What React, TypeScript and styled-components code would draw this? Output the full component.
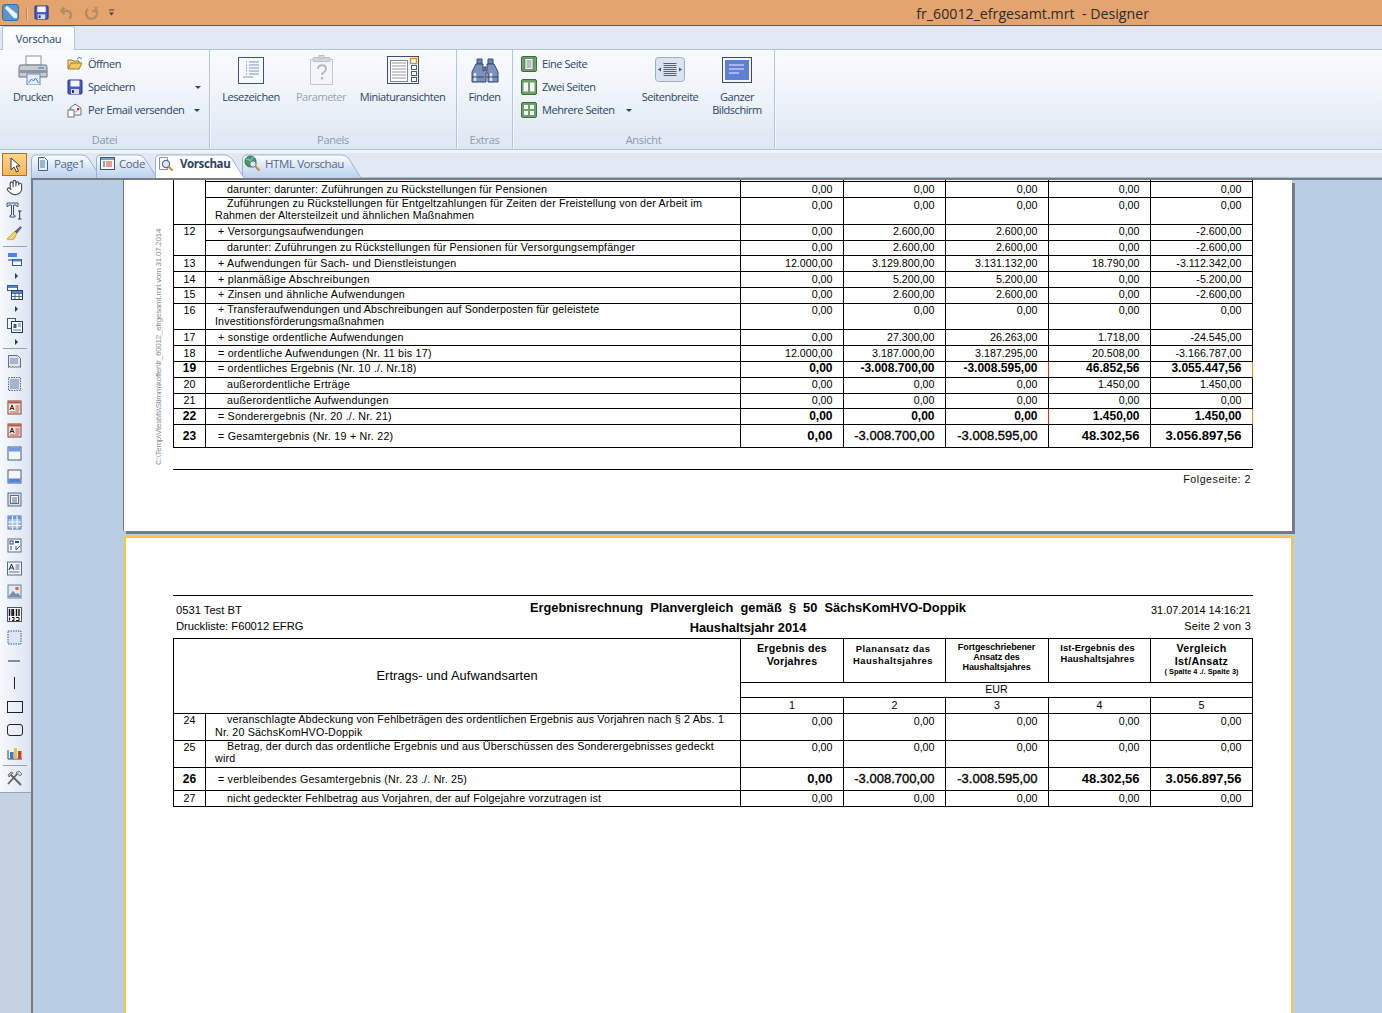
import React from 'react'
import styled, { createGlobalStyle } from 'styled-components'
import { Hand } from 'lucide-react'

const UI_FONT = `"Open Sans", "Noto Sans", sans-serif`
const REPORT_FONT = `"Liberation Sans", Arial, sans-serif`

const GlobalStyle = createGlobalStyle`
  html, body {
    margin: 0;
    padding: 0;
    height: 100%;
    overflow: hidden;
    background: #dfe8f3;
  }
  #root {
    height: 100%;
  }
  * {
    box-sizing: border-box;
  }
`

const Window = styled.div`
  display: flex;
  flex-direction: column;
  height: 100vh;
  overflow: hidden;
  font-family: ${UI_FONT};
`

/* title bar */
const TitleBar = styled.div`
  flex: none;
  height: 26px;
  display: flex;
  align-items: center;
  padding-left: 2px;
  background: #e3a46f;
  border-bottom: 1px solid #5f5a55;
`
const QuickAccess = styled.div`
  display: flex;
  align-items: center;
  height: 100%;
`
const QuickSep = styled.div`
  width: 1px;
  height: 13px;
  margin: 2px 7px 0 7px;
  background: #b98a64;
  box-shadow: 1px 0 0 #f0c39e;
`
const QuickSlot = styled.div<{ $w: number }>`
  width: ${({ $w }) => $w}px;
  display: flex;
`
const WindowTitle = styled.div`
  margin-left: auto;
  padding-right: 233px;
  margin-top: 2px;
  font-size: 14.2px;
  color: #2e2a26;
  white-space: pre;
`

/* ribbon */
const RibbonTabs = styled.div`
  flex: none;
  height: 23px;
  display: flex;
  align-items: flex-end;
  padding-left: 2px;
  background: #dfe8f3;
`
const RibbonTab = styled.div`
  position: relative;
  z-index: 1;
  width: 73px;
  height: 24px;
  margin-bottom: -1px;
  display: flex;
  align-items: center;
  justify-content: center;
  font-size: 11px;
  letter-spacing: -0.3px;
  color: #24406b;
  background: linear-gradient(#ffffff, #f4f8fc);
  border: 1px solid #b4c5da;
  border-bottom: none;
  border-radius: 3px 3px 0 0;
`
const Ribbon = styled.div`
  flex: none;
  height: 101px;
  display: flex;
  background: linear-gradient(#f8fbfe, #f2f6fb 35%, #dde7f3);
  border-top: 1px solid #b4c5da;
  border-bottom: 1px solid #b3c3d7;
`
const Group = styled.div<{ $w: number }>`
  width: ${({ $w }) => $w}px;
  height: 98px;
  display: flex;
  flex-direction: column;
  border-right: 1px solid #b5c6da;
  box-shadow: 1px 0 0 #f6f9fc;
`
const GroupBody = styled.div<{ $pad: number; $gap: number }>`
  flex: 1;
  display: flex;
  align-items: flex-start;
  padding: 5px 0 0 ${({ $pad }) => $pad}px;
  gap: ${({ $gap }) => $gap}px;
`
const GroupLabel = styled.div`
  height: 18px;
  line-height: 20px;
  text-align: center;
  font-size: 11px;
  letter-spacing: -0.3px;
  color: #8b9ab0;
`
const BigButton = styled.div<{ $w: number; $disabled?: boolean }>`
  width: ${({ $w }) => $w}px;
  flex: none;
  display: flex;
  flex-direction: column;
  align-items: center;
  font-size: 11px;
  line-height: 13px;
  letter-spacing: -0.45px;
  text-align: center;
  white-space: nowrap;
  color: ${({ $disabled }) => ($disabled ? '#97a3b5' : '#2c4468')};
`
const BigIcon = styled.div<{ $top?: number }>`
  height: 35px;
  padding-top: ${({ $top }) => $top ?? 0}px;
  display: flex;
  align-items: flex-start;
  justify-content: center;
`
const SmallList = styled.div<{ $w: number }>`
  width: ${({ $w }) => $w}px;
  flex: none;
  margin-top: -3px;
  display: flex;
  flex-direction: column;
`
const SmallItem = styled.div`
  height: 23px;
  display: flex;
  align-items: center;
  gap: 5px;
  font-size: 11px;
  letter-spacing: -0.45px;
  white-space: nowrap;
  color: #2c4468;
`
const MenuCaret = styled.span<{ $left: number }>`
  position: relative;
  left: ${({ $left }) => $left}px;
  width: 0;
  height: 0;
  margin-top: 1px;
  border-left: 3px solid transparent;
  border-right: 3px solid transparent;
  border-top: 3px solid #2c4468;
`
const RibbonGap = styled.div`
  flex: none;
  height: 3px;
  background: #f0f4f9;
`

/* lower part */
const Body = styled.div`
  flex: 1;
  min-height: 0;
  display: flex;
`
const Sidebar = styled.div`
  flex: none;
  width: 31px;
  display: flex;
  flex-direction: column;
  background: linear-gradient(90deg, #f6f9fd, #dbe5f2);
`
const Tool = styled.div<{ $active?: boolean }>`
  flex: none;
  height: 23px;
  width: 25px;
  margin-left: 2px;
  display: flex;
  align-items: center;
  justify-content: center;
  background: ${({ $active }) => ($active ? 'linear-gradient(#fbd58b, #f8b75a)' : 'transparent')};
  border: 1px solid ${({ $active }) => ($active ? '#c2681c' : 'transparent')};
`
const ToolArrow = styled.div`
  flex: none;
  height: 10px;
  padding-left: 15px;
  display: flex;
  align-items: center;
  &::before {
    content: '';
    border-top: 3px solid transparent;
    border-bottom: 3px solid transparent;
    border-left: 3px solid #1f3a63;
  }
`
const ToolSep = styled.div`
  flex: none;
  height: 1px;
  margin: 1px 4px 1px 3px;
  background: #9aa2ad;
`
const SidebarRest = styled.div`
  flex: 1;
  margin-top: 2px;
  background: #c5d2e2;
  border-top: 1px solid #93a5bd;
`
const Content = styled.div`
  flex: 1;
  min-width: 0;
  display: flex;
  flex-direction: column;
`
const DocTabs = styled.div`
  flex: none;
  height: 25px;
  display: flex;
  align-items: flex-end;
  background: #dfe8f3;
  border-bottom: 1px solid #a7bbd6;
`
const DocTab = styled.div<{ $w: number; $overlap: number; $pad: number; $active?: boolean }>`
  position: relative;
  z-index: ${({ $active }) => ($active ? 2 : 1)};
  flex: none;
  width: ${({ $w }) => $w}px;
  height: 24px;
  margin-left: ${({ $overlap }) => -$overlap}px;
  margin-bottom: -1px;
  padding: 0 0 5px ${({ $pad }) => $pad}px;
  display: flex;
  align-items: center;
  gap: ${({ $active }) => ($active ? 6 : 4)}px;
  font-size: 11.5px;
  letter-spacing: ${({ $active }) => ($active ? -0.4 : -0.4)}px;
  font-weight: ${({ $active }) => ($active ? 700 : 400)};
  color: ${({ $active }) => ($active ? '#33435e' : '#52678a')};
  white-space: nowrap;
`
const TabOutline = styled.svg`
  position: absolute;
  left: 0;
  top: 0;
`
const TabLabel = styled.span`
  position: relative;
  display: flex;
  align-items: center;
  gap: inherit;
`
const Scroller = styled.div`
  flex: 1;
  min-height: 0;
  overflow: hidden;
  padding-left: 90px;
  background: #b9cde5;
  border-top: 2px solid #7b7b7b;
  border-left: 2px solid #777c84;
`

/* report pages */
const Sheet = styled.div<{ $current?: boolean }>`
  background: #fff;
  ${({ $current }) =>
    $current
      ? `
    width: 1169px;
    margin: 5px 0 0 1px;
    height: 600px;
    padding-top: 57px;
    padding-left: 47px;
    border: 2px solid #f6c83e;
    border-bottom: none;
  `
      : `
    width: 1169px;
    height: 351px;
    border-left: 1px solid #6f7785;
    box-shadow: 3px 3px 0 #737b88;
    display: flex;
  `}
`
const SideGutter = styled.div`
  flex: none;
  width: 49px;
  padding: 47px 0 0 30px;
`
const SideNote = styled.div`
  writing-mode: vertical-rl;
  transform: rotate(180deg);
  height: 238px;
  font-family: ${REPORT_FONT};
  font-size: 8px;
  line-height: 10px;
  letter-spacing: -0.25px;
  white-space: nowrap;
  color: #868e97;
`
const ReportColumn = styled.div`
  width: 1080px;
`
const Table = styled.table`
  width: 1080px;
  table-layout: fixed;
  border-collapse: separate;
  border-spacing: 0;
  font-family: ${REPORT_FONT};
  color: #000;
`
const Cell = styled.td<{ $h: number; $pad?: number; $noLine?: boolean; $edge?: string }>`
  height: ${({ $h }) => $h}px;
  padding: ${({ $pad }) => $pad ?? 0}px 0 0 0;
  vertical-align: top;
  border-right: 1px solid ${({ $edge }) => $edge ?? '#000'};
  border-bottom: ${({ $noLine }) => ($noLine ? 'none' : '1px solid #000')};
  overflow: hidden;
`
const NumCell = styled(Cell)<{ $big?: boolean }>`
  border-left: 1px solid #000;
  text-align: center;
  font-size: ${({ $big }) => ($big ? 12 : 10.7)}px;
  font-weight: ${({ $big }) => ($big ? 700 : 400)};
  line-height: 12px;
`
const LabelCell = styled(Cell)<{ $indent: number; $track: number; $lh?: number }>`
  padding-left: 9px;
  font-size: 10.7px;
  line-height: ${({ $lh }) => $lh ?? 12}px;
  letter-spacing: ${({ $track }) => $track}px;
  text-indent: ${({ $indent }) => $indent}px;
  white-space: pre-line;
`
const LabelText = styled.div<{ $lift?: number }>`
  margin-top: ${({ $lift }) => -($lift ?? 0)}px;
`
const ValueCell = styled(Cell)<{ $bold?: boolean; $big?: boolean; $semi?: boolean }>`
  padding-right: 10.5px;
  text-align: right;
  white-space: nowrap;
  font-size: ${({ $bold, $big }) => ($big ? 13 : $bold ? 12 : 10.7)}px;
  font-weight: ${({ $bold, $big }) => ($bold || $big ? 700 : 400)};
  line-height: 12px;
  ${({ $semi }) => ($semi ? 'font-weight: 400; -webkit-text-stroke: 0.35px #000;' : '')}
`
const FootRule = styled.div`
  margin-top: 21px;
  height: 18px;
  border-top: 1px solid #000;
  font-family: ${REPORT_FONT};
  font-size: 10.7px;
  line-height: 18px;
  text-align: right;
  padding-right: 2px;
  letter-spacing: 0.5px;
  color: #111;
`
const PageHeader = styled.div`
  height: 43px;
  display: grid;
  grid-template-columns: 220px 1fr 150px;
  border-top: 1px solid #000;
  font-family: ${REPORT_FONT};
  color: #000;
`
const HeaderSide = styled.div<{ $right?: boolean }>`
  padding: 6px 2px 0 3px;
  font-size: ${({ $right }) => ($right ? 10.9 : 11.2)}px;
  line-height: 16px;
  text-align: ${({ $right }) => ($right ? 'right' : 'left')};
  white-space: nowrap;
`
const WideText = styled.span`
  letter-spacing: 0.25px;
`
const HeaderTitle = styled.div`
  padding-top: 2px;
  text-align: center;
  font-size: 12.8px;
  font-weight: 700;
  line-height: 20px;
  white-space: pre;
`
const ColumnTitle = styled.td`
  height: 59px;
  border-left: 1px solid #000;
  border-right: 1px solid #000;
  border-top: 1px solid #000;
  border-bottom: 1px solid #000;
  text-align: center;
  font-size: 12.8px;
  padding-bottom: 3px;
  letter-spacing: 0.1px;
`
const HeadCell = styled.td<{ $fs: number; $track: number; $lh: number; $pt: number; $pr?: number }>`
  height: 45px;
  padding: ${({ $pt }) => $pt}px ${({ $pr }) => $pr ?? 0}px 0 0;
  vertical-align: top;
  text-align: center;
  border-top: 1px solid #000;
  border-right: 1px solid #000;
  border-bottom: 1px solid #000;
  font-size: ${({ $fs }) => $fs}px;
  font-weight: 700;
  line-height: ${({ $lh }) => $lh}px;
  letter-spacing: ${({ $track }) => $track}px;
  white-space: pre-line;
`
const HeadNote = styled.div`
  font-size: 7.4px;
  line-height: 7px;
  letter-spacing: 0;
`
const UnitCell = styled.td<{ $h: number; $pt: number }>`
  height: ${({ $h }) => $h}px;
  padding: ${({ $pt }) => $pt}px 0 0 0;
  text-align: center;
  font-size: 10.7px;
  line-height: 12px;
  vertical-align: top;
  border-right: 1px solid #000;
  border-bottom: 1px solid #000;
`
const IconSvg = styled.svg`
  display: block;
  flex: none;
`

type RowData = {
  no?: string
  big?: boolean
  label: string
  indent: number
  track: number
  h: number
  pad: number
  vpad?: number
  lh?: number
  lift?: number
  noLine?: boolean
  values: string[]
  weight?: 'bold' | 'big'
  marks?: boolean
  semi?: boolean
}

const zero = ['0,00', '0,00', '0,00', '0,00', '0,00']
const zeroNeg = ['0,00', '2.600,00', '2.600,00', '0,00', '-2.600,00']

const pageOneRows: RowData[] = [
  { label: '', indent: 0, track: 0, h: 2, pad: 0, noLine: true, values: ['', '', '', '', ''] },
  { label: 'darunter: darunter: Zuführungen zu Rückstellungen für Pensionen', indent: 12, track: 0.14, h: 16, pad: 1, noLine: true, values: zero },
  { label: 'Zuführungen zu Rückstellungen für Entgeltzahlungen für Zeiten der Freistellung von der Arbeit im\nRahmen der Altersteilzeit und ähnlichen Maßnahmen', indent: 12, track: 0.16, h: 27, pad: 0, vpad: 1, lift: 1, values: zero },
  { no: '12', label: '+ Versorgungsaufwendungen', indent: 3, track: 0.25, h: 16, pad: 0, noLine: true, values: zeroNeg },
  { label: 'darunter: Zuführungen zu Rückstellungen für Pensionen für Versorgungsempfänger', indent: 12, track: 0.17, h: 15, pad: 0, values: zeroNeg },
  { no: '13', label: '+ Aufwendungen für Sach- und Dienstleistungen', indent: 3, track: 0.21, h: 16, pad: 1, values: ['12.000,00', '3.129.800,00', '3.131.132,00', '18.790,00', '-3.112.342,00'] },
  { no: '14', label: '+ planmäßige Abschreibungen', indent: 3, track: 0.26, h: 16, pad: 1, values: ['0,00', '5.200,00', '5.200,00', '0,00', '-5.200,00'] },
  { no: '15', label: '+ Zinsen und ähnliche Aufwendungen', indent: 3, track: 0.25, h: 16, pad: 0, values: zeroNeg },
  { no: '16', label: '+ Transferaufwendungen und Abschreibungen auf Sonderposten für geleistete\nInvestitionsförderungsmaßnahmen', indent: 3, track: 0.15, h: 26, pad: 0, lift: 1, values: zero },
  { no: '17', label: '+ sonstige ordentliche Aufwendungen', indent: 3, track: 0.22, h: 16, pad: 1, values: ['0,00', '27.300,00', '26.263,00', '1.718,00', '-24.545,00'] },
  { no: '18', label: '= ordentliche Aufwendungen (Nr. 11 bis 17)', indent: 3, track: 0.22, h: 16, pad: 1, values: ['12.000,00', '3.187.000,00', '3.187.295,00', '20.508,00', '-3.166.787,00'] },
  { no: '19', big: true, label: '= ordentliches Ergebnis (Nr. 10 ./. Nr.18)', indent: 3, track: 0.18, h: 16, pad: 0, weight: 'bold', marks: true, values: ['0,00', '-3.008.700,00', '-3.008.595,00', '46.852,56', '3.055.447,56'] },
  { no: '20', label: 'außerordentliche Erträge', indent: 12, track: 0.2, h: 16, pad: 0, values: ['0,00', '0,00', '0,00', '1.450,00', '1.450,00'] },
  { no: '21', label: 'außerordentliche Aufwendungen', indent: 12, track: 0.27, h: 15, pad: 0, values: zero },
  { no: '22', big: true, label: '= Sonderergebnis (Nr. 20 ./. Nr. 21)', indent: 3, track: 0.2, h: 16, pad: 1, weight: 'bold', marks: true, values: ['0,00', '0,00', '0,00', '1.450,00', '1.450,00'] },
  { no: '23', big: true, label: '= Gesamtergebnis (Nr. 19 + Nr. 22)', indent: 3, track: 0.25, h: 23, pad: 5, weight: 'big', values: ['0,00', '-3.008.700,00', '-3.008.595,00', '48.302,56', '3.056.897,56'], semi: true },
]

const pageTwoRows: RowData[] = [
  { no: '24', label: 'veranschlagte Abdeckung von Fehlbeträgen des ordentlichen Ergebnis aus Vorjahren nach § 2 Abs. 1\nNr. 20 SächsKomHVO-Doppik', indent: 12, track: 0.17, h: 27, pad: 0, vpad: 1, lh: 13, lift: 1, values: zero },
  { no: '25', label: 'Betrag, der durch das ordentliche Ergebnis und aus Überschüssen des Sonderergebnisses gedeckt\nwird', indent: 12, track: 0.17, h: 27, pad: 0, lift: 1, values: zero },
  { no: '26', big: true, label: '= verbleibendes Gesamtergebnis (Nr. 23 ./. Nr. 25)', indent: 3, track: 0.2, h: 23, pad: 5, weight: 'big', values: ['0,00', '-3.008.700,00', '-3.008.595,00', '48.302,56', '3.056.897,56'], semi: true },
  { no: '27', label: 'nicht gedeckter Fehlbetrag aus Vorjahren, der auf Folgejahre vorzutragen ist', indent: 12, track: 0.17, h: 16, pad: 1, values: zero },
]

const Columns = () => (
  <colgroup>
    {[33, 535, 103, 102, 103, 102, 102].map((w, i) => (
      <col key={i} width={w} />
    ))}
  </colgroup>
)

const ReportRow = ({ row }: { row: RowData }) => (
  <tr>
    <NumCell $h={row.h} $pad={row.weight === 'big' ? 5 : row.pad} $big={row.big} $noLine={row.noLine}>
      {row.no}
    </NumCell>
    <LabelCell $h={row.h} $pad={row.pad} $indent={row.indent} $track={row.track} $lh={row.lh}>
      <LabelText $lift={row.lift}>{row.label}</LabelText>
    </LabelCell>
    {row.values.map((value, i) => {
      const semi = row.semi && value.startsWith('-')
      return (
        <ValueCell
          key={i}
          $h={row.h}
          $pad={row.vpad ?? row.pad}
          $bold={row.weight === 'bold'}
          $big={row.weight === 'big'}
          $semi={semi}
          $edge={row.marks && i === 2 ? '#e8261c' : row.marks && i === 4 ? '#f08a1e' : undefined}
        >
          {value}
        </ValueCell>
      )
    })}
  </tr>
)

/* icons */
const Svg = ({ size = 16, w, h, box, children }: { size?: number; w?: number; h?: number; box?: string; children: React.ReactNode }) => (
  <IconSvg width={w ?? size} height={h ?? size} viewBox={box ?? `0 0 ${w ?? size} ${h ?? size}`}>
    {children}
  </IconSvg>
)

const AppIcon = () => (
  <Svg w={17} h={17}>
    <rect x="0.5" y="0.5" width="16" height="16" rx="2.5" fill="#5c93c9" stroke="#3c6f9f" />
    <path d="M3 4l2-2 10 8v4h-3z" fill="#eef4fa" stroke="#d7e3ef" strokeWidth="0.5" />
  </Svg>
)
const Floppy = ({ size = 16 }: { size?: number }) => (
  <Svg size={size} box="0 0 16 16">
    <rect x="1" y="1" width="14" height="14" rx="1" fill="#4a5cc0" stroke="#26327c" />
    <rect x="3.5" y="1.5" width="9" height="6" fill="#f6f8fd" />
    <rect x="4" y="10" width="8" height="5" fill="#d9dce6" />
    <rect x="5" y="11" width="2" height="3" fill="#2b3377" />
  </Svg>
)
const UndoIcon = ({ flip }: { flip?: boolean }) => (
  <Svg size={14}>
    <path
      d={flip ? 'M3 3a5.5 5.5 0 1 0 8 1M11 1v4H7' : 'M2 5h6a4 4 0 0 1 2 7.5M2 5l3.5-3.5M2 5l3.5 3.5'}
      fill="none"
      stroke="#b98a64"
      strokeWidth="2.4"
    />
  </Svg>
)
const QatMenu = () => (
  <Svg w={7} h={8}>
    <path d="M1 1h5" stroke="#4a3f38" />
    <path d="M1 3.5h5l-2.5 3z" fill="#4a3f38" />
  </Svg>
)
const PrinterIcon = () => (
  <Svg size={30} box="0 0 30 30">
    <rect x="8" y="1" width="15" height="9" fill="#fdfdfd" stroke="#8d929a" />
    <path d="M2 10h26l1 2v10H1V12z" fill="#c8cdd3" stroke="#6f7680" />
    <rect x="1.5" y="15" width="27" height="3" fill="#8f969f" />
    <rect x="20" y="12" width="6" height="2" fill="#6fa6dd" />
    <rect x="9" y="19" width="13" height="11" fill="#e4edf9" stroke="#6b87ad" />
    <path d="M10.5 28l3-4 2 2 2-3 3 5" fill="none" stroke="#3f7cc4" />
  </Svg>
)
const FolderIcon = () => (
  <Svg size={16}>
    <path d="M1 13V4h4l1 1h6v2" fill="#f4d98a" stroke="#9b7a2a" />
    <path d="M1 13l3-6h11l-3 6z" fill="#f6c95c" stroke="#9b7a2a" />
    <path d="M10 3l2-1.5 3 1" fill="none" stroke="#6a7a90" />
  </Svg>
)
const MailIcon = () => (
  <Svg size={16}>
    <path d="M3 6l5-4 6 4v7H3z" fill="#f4f4f4" stroke="#6d7480" />
    <path d="M3 6l5.5 4L14 6" fill="none" stroke="#8d929a" />
    <rect x="1" y="8" width="6" height="7" fill="#fff" stroke="#6d7480" />
    <rect x="10" y="6" width="2" height="2" fill="#c93a2e" />
  </Svg>
)
const ListDoc = () => (
  <Svg w={26} h={27}>
    <rect x="0.5" y="0.5" width="25" height="26" fill="#f7fafd" stroke="#3d5579" strokeWidth="1" />
    {[5, 8, 11, 14, 17, 20].map((y, i) => (
      <path key={y} d={`M${i === 5 ? 5 : 11} ${y}h10`} stroke="#7d99c0" />
    ))}
    {[5, 8, 11, 14, 17].map((y) => (
      <rect key={y} x="8" y={y - 0.5} width="1" height="1" fill="#52709b" />
    ))}
  </Svg>
)
const ParamIcon = () => (
  <Svg w={25} h={30}>
    <rect x="1.5" y="4.5" width="22" height="25" fill="#f3f5f8" stroke="#c2c8d0" />
    <rect x="4" y="2.5" width="17" height="4" rx="1" fill="#d4d8de" stroke="#bcc2ca" />
    <rect x="10" y="0.5" width="5" height="3" fill="#d4d8de" stroke="#bcc2ca" />
    <path d="M9 14c0-5 8-5 8 0 0 3-4 3-4 6" fill="none" stroke="#b3b9c2" strokeWidth="2" />
    <rect x="12" y="22" width="2.2" height="2.4" fill="#b3b9c2" />
  </Svg>
)
const ThumbsIcon = () => (
  <Svg w={32} h={28}>
    <rect x="0.5" y="0.5" width="31" height="27" fill="#f3f6fa" stroke="#3f4f66" />
    <rect x="3.5" y="4.5" width="17" height="21" fill="#fff" stroke="#7d8794" />
    {[7, 10, 13, 16, 19, 22].map((y) => (
      <path key={y} d={`M5 ${y}h14`} stroke="#8d97a3" />
    ))}
    <rect x="23.5" y="2.5" width="6" height="5" fill="#fff" stroke="#e58a1c" strokeWidth="1.4" />
    {[9.5, 15.5, 21.5].map((y) => (
      <rect key={y} x="24.5" y={y} width="5" height="4" fill="#fff" stroke="#4b5b72" />
    ))}
  </Svg>
)
const BinocularIcon = () => (
  <Svg w={28} h={25}>
    <path d="M6 1h5v5H6zM17 1h5v5h-5z" fill="#6f83ad" stroke="#3f5078" />
    <path d="M5 6h7v7l1 0v-4h2v4h1V6h7l4 8v10h-10V15h-2v9H1V14z" fill="#7b90bb" stroke="#34456c" />
    <path d="M4 15v8M20 15v8" stroke="#dbe5f6" strokeWidth="2.5" />
    <path d="M1 19h12M15 19h12" stroke="#34456c" />
  </Svg>
)
const PageBadge = ({ kind }: { kind: 'one' | 'two' | 'many' }) => (
  <Svg size={16}>
    <rect x="0.5" y="0.5" width="15" height="15" rx="1.5" fill="#6fa06a" stroke="#3d6d3c" />
    {kind === 'one' && <rect x="4" y="2.5" width="8" height="11" fill="#f5f8f2" stroke="#3d6d3c" strokeWidth="0.6" />}
    {kind === 'one' && <path d="M5.5 5h5M5.5 7h5M5.5 9h5M5.5 11h5" stroke="#557" strokeWidth="0.7" />}
    {kind === 'two' && <rect x="2.5" y="3.5" width="4.5" height="9" fill="#f5f8f2" />}
    {kind === 'two' && <rect x="9" y="3.5" width="4.5" height="9" fill="#f5f8f2" />}
    {kind === 'many' &&
      [
        [3, 3],
        [9, 3],
        [3, 9],
        [9, 9],
      ].map(([x, y]) => <rect key={`${x}${y}`} x={x} y={y} width="4" height="4" fill="#f5f8f2" />)}
  </Svg>
)
const PageWidthIcon = () => (
  <Svg w={30} h={25}>
    <rect x="0.5" y="0.5" width="29" height="24" rx="3" fill="#dbe4ee" stroke="#9eaec2" />
    {[6, 8, 10, 12, 14, 16, 18].map((y) => (
      <path key={y} d={`M8.5 ${y + 0.5}h13`} stroke="#47505f" strokeWidth="0.9" />
    ))}
    <path d="M6 10.5v4l-3-2zM24 10.5v4l3-2z" fill="#2f5a94" />
  </Svg>
)
const ScreenIcon = () => (
  <Svg w={30} h={26}>
    <rect x="0.5" y="0.5" width="29" height="25" fill="#f4f6fa" stroke="#3e4a5f" />
    <rect x="3" y="3" width="24" height="20" fill="#5f80d4" />
    <path d="M7 8h15M7 12h15M7 16h10" stroke="#e8effb" />
  </Svg>
)

const DocLines = () => (
  <Svg size={14}>
    <path d="M2.5 0.5h6l3 3v10h-9z" fill="#eaf1fb" stroke="#3f6296" />
    <path d="M4 4h5M4 6h5M4 8h5M4 10h5" stroke="#4d76b3" />
  </Svg>
)
const CodeTabIcon = () => (
  <Svg size={15}>
    <rect x="0.5" y="1.5" width="14" height="12" fill="#f5f7fb" stroke="#3d5579" />
    <rect x="1" y="2" width="13" height="2" fill="#7a9ad0" />
    <path d="M3 6h2M3 8h2M3 10h2" stroke="#2f4d7d" />
    <path d="M6 6h6M6 8h6M6 10h6" stroke="#d1482e" />
  </Svg>
)
const PreviewTabIcon = () => (
  <Svg size={16}>
    <path d="M1.5 1.5h8v12h-8z" fill="#fff" stroke="#8d929a" />
    <circle cx="8" cy="8" r="3.6" fill="#dce8f6" stroke="#5a6b82" strokeWidth="1.2" />
    <path d="M10.5 10.5l4 4" stroke="#c98a3b" strokeWidth="2.2" />
  </Svg>
)
const GlobeTabIcon = () => (
  <Svg size={17}>
    <circle cx="6.5" cy="6.5" r="5.5" fill="#4d9a4d" stroke="#2e6d52" />
    <path d="M2 5c3-3 3 2 5 0s1-3 3-3" fill="none" stroke="#6fb6e6" strokeWidth="1.6" />
    <circle cx="9" cy="9" r="3.2" fill="#dce8f6" stroke="#5a6b82" />
    <path d="M11 11l4.5 4.5" stroke="#c98a3b" strokeWidth="2.2" />
  </Svg>
)

const TabShape = ({ w, active }: { w: number; active?: boolean }) => {
  const id = active ? 'tab-on' : 'tab-off'
  return (
    <TabOutline width={w} height={24} viewBox={`0 0 ${w} 24`}>
      <defs>
        <linearGradient id={id} x1="0" y1="0" x2="0" y2="1">
          <stop offset="0" stopColor="#fbfdff" />
          <stop offset="1" stopColor={active ? '#ffffff' : '#bcd1ee'} />
        </linearGradient>
      </defs>
      <path
        d={`M0.5 24V6Q0.5 1 5 1H${w - 20}Q${w - 16} 1 ${w - 13} 5L${w - 1} 24`}
        fill={`url(#${id})`}
        stroke="#9db2cf"
      />
    </TabOutline>
  )
}

const toolIcon = (name: string) => {
  switch (name) {
    case 'pointer':
      return (
        <Svg size={16}>
          <path d="M4 1v12l3-3 2.5 5 2-1-2.5-5H13z" fill="#fff" stroke="#2f3540" />
        </Svg>
      )
    case 'hand':
      return <Hand size={17} color="#4a4f58" fill="#fff" strokeWidth={1.6} />
    case 'text':
      return (
        <Svg size={18}>
          <path d="M1 1h11v3.5h-1L10 3H7.5v10l1.5 .5V15H4v-1.5L5.5 13V3H3L2 4.5H1z" fill="#e9eff7" stroke="#3e5377" />
          <path d="M12 9h3.5M13.7 9v8M12 17h3.5" stroke="#333" />
        </Svg>
      )
    case 'brush':
      return (
        <Svg size={17}>
          <path d="M9 6l2 2-3 6c-2 1-5 1-7 0z" fill="#f0d66b" stroke="#a88f34" strokeWidth="0.7" />
          <path d="M9 6.5L14.5 1.5l1 1L11 8z" fill="#5e5c9a" stroke="#3d3b70" strokeWidth="0.6" />
        </Svg>
      )
    case 'bandA':
      return (
        <Svg size={16}>
          <rect x="1" y="1" width="9" height="4" fill="#4e86dc" />
          <path d="M1 8h7" stroke="#24406b" />
          <rect x="5.5" y="7.5" width="9" height="6" fill="#f7fafd" stroke="#3a5a8a" />
          <rect x="6" y="7.5" width="8" height="2" fill="#4e86dc" />
        </Svg>
      )
    case 'bandB':
      return (
        <Svg size={16}>
          <rect x="0.5" y="0.5" width="10" height="5" fill="#fff" stroke="#3a5a8a" />
          <rect x="1" y="1" width="9" height="2" fill="#4e86dc" />
          <rect x="4.5" y="5.5" width="11" height="9" fill="#f7fafd" stroke="#253a5c" />
          <path d="M4.5 8.5h11M4.5 11.5h11M8 5.5v9M12 5.5v9" stroke="#253a5c" strokeWidth="0.7" />
          <rect x="5" y="6" width="10" height="2" fill="#4e86dc" />
        </Svg>
      )
    case 'bandC':
      return (
        <Svg size={16}>
          <rect x="0.5" y="0.5" width="8" height="10" fill="#f0f4fa" stroke="#3a5a8a" />
          <rect x="4.5" y="3.5" width="11" height="11" fill="#fff" stroke="#253a5c" />
          <rect x="6.5" y="6" width="3" height="4" fill="#2f5a94" />
          <path d="M11 6h3M11 8h3M6 12h8" stroke="#4d76b3" />
        </Svg>
      )
    case 'zigA':
      return (
        <Svg size={15}>
          <path d="M1.5 1.5h9l3 3v9l-1.5-1-1.5 1-1.5-1-1.5 1-1.5-1-1.5 1-1.5-1-1.5 1z" fill="#dfe5ee" stroke="#67707e" />
          <path d="M3 5h8M3 7h8M3 9h8" stroke="#6c86ac" />
        </Svg>
      )
    case 'zigB':
      return (
        <Svg size={15}>
          <rect x="1.5" y="0.5" width="12" height="13" fill="#dde4ee" stroke="#67707e" strokeDasharray="1.5 1" />
          <path d="M3 3h9M3 5h9M3 7h9M3 9h9M3 11h9" stroke="#6c86ac" />
        </Svg>
      )
    case 'redA':
    case 'redB':
      return (
        <Svg size={15}>
          <rect x="1" y="1" width="13" height="13" fill={name === 'redA' ? '#f6e9e4' : '#f0dcd5'} stroke="#8a3d2e" />
          <rect x="1.5" y="1.5" width="12" height="2" fill="#b55a48" />
          <path d="M3 10l2-5 2 5M3.7 8.5h2.6" fill="none" stroke="#3a1f1a" />
          <path d="M8.5 6h4M8.5 8h4M8.5 10h4M3 12h9" stroke="#b55a48" />
        </Svg>
      )
    case 'winTop':
    case 'winBottom':
      return (
        <Svg size={15}>
          <rect x="1" y="1" width="13" height="13" fill="#f4f6fa" stroke="#4a5f80" />
          <rect x="1.5" y={name === 'winTop' ? 1.5 : 9.5} width="12" height="4" fill={name === 'winTop' ? '#6f9ade' : '#4e86dc'} />
        </Svg>
      )
    case 'form':
      return (
        <Svg size={15}>
          <rect x="1" y="1" width="13" height="13" fill="#d7deea" stroke="#5c6d87" />
          <rect x="3.5" y="3.5" width="8" height="8" fill="#f7f9fc" stroke="#5c6d87" />
          <path d="M5 6h5M5 8h5M5 10h5" stroke="#5c6d87" />
        </Svg>
      )
    case 'grid':
      return (
        <Svg size={15}>
          <rect x="1" y="1" width="13" height="13" fill="#a9c2ea" stroke="#5b7db3" />
          <rect x="1" y="1" width="13" height="3" fill="#6f96d6" />
          <path d="M1 7h13M1 10.5h13M5.5 1v13M10 1v13" stroke="#fff" />
        </Svg>
      )
    case 'cross':
      return (
        <Svg size={15}>
          <rect x="1" y="1" width="13" height="13" fill="#f4f6fa" stroke="#5c6d87" />
          <rect x="3" y="3" width="3" height="3" fill="#fff" stroke="#2f4d7d" />
          <path d="M8 4h4" stroke="#2f4d7d" strokeWidth="2" />
          <path d="M4 8v4M9 8v4l2-2M13 8l-2 2" fill="none" stroke="#2f4d7d" />
        </Svg>
      )
    case 'textA':
      return (
        <Svg size={15}>
          <rect x="0.5" y="1" width="14" height="13" fill="#f4f6fa" stroke="#5c6d87" />
          <path d="M2 9l2.5-6L7 9M3 7h3" fill="none" stroke="#1f2c44" />
          <path d="M8.5 4h4M8.5 6h4M8.5 8h4M2 11h10.5" stroke="#5c6d87" />
        </Svg>
      )
    case 'image':
      return (
        <Svg size={15}>
          <rect x="1" y="1" width="13" height="13" fill="#dfe8f5" stroke="#6d7f9c" />
          <circle cx="10" cy="4.5" r="1.8" fill="#e86b2e" />
          <path d="M1 13l5-6 3 3 2-1 3 4z" fill="#7d8da6" />
        </Svg>
      )
    case 'barcode':
      return (
        <Svg size={15}>
          <rect x="0.5" y="0.5" width="14" height="14" fill="#f4f6fa" stroke="#4a5462" />
          <path d="M2.5 2v7M5 2v7M6.5 2v7M9.5 2v7M12 2v7" stroke="#111" strokeWidth="1.4" />
          <path d="M2.5 10.5v3M5 10.5h2v3h-2M9 10.5h3v3h-3" fill="none" stroke="#111" />
        </Svg>
      )
    case 'dashed':
      return (
        <Svg size={15}>
          <rect x="1" y="1" width="13" height="13" fill="#dfe7f4" stroke="#2f5fb8" strokeDasharray="1.5 1" />
        </Svg>
      )
    case 'hline':
      return (
        <Svg size={15}>
          <path d="M1 8h12" stroke="#222" />
        </Svg>
      )
    case 'vline':
      return (
        <Svg size={15}>
          <path d="M7.5 1v12" stroke="#222" />
        </Svg>
      )
    case 'rect':
      return (
        <Svg size={16}>
          <rect x="0.5" y="2.5" width="15" height="11" fill="none" stroke="#222" />
        </Svg>
      )
    case 'round':
      return (
        <Svg size={16}>
          <rect x="0.5" y="2.5" width="15" height="11" rx="2.5" fill="none" stroke="#222" />
        </Svg>
      )
    case 'chart':
      return (
        <Svg size={16}>
          <path d="M1 14V5M1 14h14" stroke="#3d4656" />
          <rect x="3" y="7" width="3.5" height="7" fill="#3f78d0" />
          <rect x="7" y="3" width="3" height="11" fill="#e5c53e" />
          <rect x="11" y="6" width="3.5" height="8" fill="#c8402e" />
        </Svg>
      )
    default:
      return (
        <Svg size={17}>
          <path d="M5 5l10 10" stroke="#5b616b" strokeWidth="1.8" />
          <path d="M2 5l3-3 2 1-4 4z" fill="#a9afb8" stroke="#4d535c" strokeWidth="0.7" />
          <path d="M12 3L2 14" stroke="#5b616b" strokeWidth="1.8" />
          <path d="M10 2.5l3-1.5 3 3-2 2z" fill="#d6dade" stroke="#4d535c" strokeWidth="0.7" />
        </Svg>
      )
  }
}

const bandTools = ['bandA', 'bandB', 'bandC']
const reportTools = ['zigA', 'zigB', 'redA', 'redB', 'winTop', 'winBottom', 'form', 'grid', 'cross', 'textA', 'image', 'barcode', 'dashed', 'hline', 'vline', 'rect', 'round', 'chart']

const headColumns = [
  { text: 'Ergebnis des\nVorjahres', fs: 10.7, track: 0.25, lh: 13, pt: 3, pr: 0 },
  { text: 'Planansatz das\nHaushaltsjahres', fs: 9.4, track: 0.5, lh: 12, pt: 4, pr: 3 },
  { text: 'Fortgeschriebener\nAnsatz des\nHaushaltsjahres', fs: 9, track: -0.1, lh: 10, pt: 3, pr: 1 },
  { text: 'Ist-Ergebnis des\nHaushaltsjahres', fs: 9.4, track: 0.1, lh: 11, pt: 3, pr: 4 },
]

export default function App() {
  return (
    <Window>
      <GlobalStyle />
      <TitleBar>
        <QuickAccess>
          <AppIcon />
          <QuickSep />
          <QuickSlot $w={25}>
            <Floppy size={15} />
          </QuickSlot>
          <QuickSlot $w={26}>
            <UndoIcon />
          </QuickSlot>
          <QuickSlot $w={23}>
            <UndoIcon flip />
          </QuickSlot>
          <QatMenu />
        </QuickAccess>
        <WindowTitle>{'fr_60012_efrgesamt.mrt  - Designer'}</WindowTitle>
      </TitleBar>

      <RibbonTabs>
        <RibbonTab>Vorschau</RibbonTab>
      </RibbonTabs>

      <Ribbon>
        <Group $w={210}>
          <GroupBody $pad={7} $gap={8}>
            <BigButton $w={52}>
              <BigIcon>
                <PrinterIcon />
              </BigIcon>
              Drucken
            </BigButton>
            <SmallList $w={138}>
              <SmallItem>
                <FolderIcon />
                Öffnen
              </SmallItem>
              <SmallItem>
                <Floppy />
                Speichern
                <MenuCaret $left={55} />
              </SmallItem>
              <SmallItem>
                <MailIcon />
                Per Email versenden
                <MenuCaret $left={5} />
              </SmallItem>
            </SmallList>
          </GroupBody>
          <GroupLabel>Datei</GroupLabel>
        </Group>

        <Group $w={247}>
          <GroupBody $pad={11} $gap={16}>
            <BigButton $w={60}>
              <BigIcon $top={2}>
                <ListDoc />
              </BigIcon>
              Lesezeichen
            </BigButton>
            <BigButton $w={48} $disabled>
              <BigIcon>
                <ParamIcon />
              </BigIcon>
              Parameter
            </BigButton>
            <BigButton $w={83}>
              <BigIcon $top={1}>
                <ThumbsIcon />
              </BigIcon>
              Miniaturansichten
            </BigButton>
          </GroupBody>
          <GroupLabel>Panels</GroupLabel>
        </Group>

        <Group $w={56}>
          <GroupBody $pad={0} $gap={0}>
            <BigButton $w={55}>
              <BigIcon $top={3}>
                <BinocularIcon />
              </BigIcon>
              Finden
            </BigButton>
          </GroupBody>
          <GroupLabel>Extras</GroupLabel>
        </Group>

        <Group $w={262}>
          <GroupBody $pad={8} $gap={15}>
            <SmallList $w={106}>
              <SmallItem>
                <PageBadge kind="one" />
                Eine Seite
              </SmallItem>
              <SmallItem>
                <PageBadge kind="two" />
                Zwei Seiten
              </SmallItem>
              <SmallItem>
                <PageBadge kind="many" />
                Mehrere Seiten
                <MenuCaret $left={6} />
              </SmallItem>
            </SmallList>
            <BigButton $w={56}>
              <BigIcon $top={2}>
                <PageWidthIcon />
              </BigIcon>
              Seitenbreite
            </BigButton>
            <BigButton $w={48}>
              <BigIcon $top={2}>
                <ScreenIcon />
              </BigIcon>
              Ganzer
              <br />
              Bildschirm
            </BigButton>
          </GroupBody>
          <GroupLabel>Ansicht</GroupLabel>
        </Group>
      </Ribbon>
      <RibbonGap />

      <Body>
        <Sidebar>
          <Tool $active>{toolIcon('pointer')}</Tool>
          <Tool>{toolIcon('hand')}</Tool>
          <Tool>{toolIcon('text')}</Tool>
          <Tool>{toolIcon('brush')}</Tool>
          <ToolSep />
          {bandTools.map((name) => (
            <React.Fragment key={name}>
              <Tool>{toolIcon(name)}</Tool>
              <ToolArrow />
            </React.Fragment>
          ))}
          <ToolSep />
          {reportTools.map((name) => (
            <Tool key={name}>{toolIcon(name)}</Tool>
          ))}
          <ToolSep />
          <Tool>{toolIcon('tools')}</Tool>
          <SidebarRest />
        </Sidebar>

        <Content>
          <DocTabs>
            <DocTab $w={71} $overlap={0} $pad={5}>
              <TabShape w={71} />
              <TabLabel>
                <DocLines />
                Page1
              </TabLabel>
            </DocTab>
            <DocTab $w={62} $overlap={6} $pad={4}>
              <TabShape w={62} />
              <TabLabel>
                <CodeTabIcon />
                Code
              </TabLabel>
            </DocTab>
            <DocTab $w={90} $overlap={3} $pad={3} $active>
              <TabShape w={90} active />
              <TabLabel>
                <PreviewTabIcon />
                Vorschau
              </TabLabel>
            </DocTab>
            <DocTab $w={120} $overlap={3} $pad={2}>
              <TabShape w={120} />
              <TabLabel>
                <GlobeTabIcon />
                HTML Vorschau
              </TabLabel>
            </DocTab>
          </DocTabs>

          <Scroller>
            <Sheet>
              <SideGutter>
                <SideNote>{'C:\\Temp\\Vtest\\fs\\Stimm\\koffer\\fr_60012_efrgesamt.mrt  vom  31.07.2014'}</SideNote>
              </SideGutter>
              <ReportColumn>
                <Table>
                  <Columns />
                  <tbody>
                    {pageOneRows.map((row, i) => (
                      <ReportRow key={i} row={row} />
                    ))}
                  </tbody>
                </Table>
                <FootRule>Folgeseite: 2</FootRule>
              </ReportColumn>
            </Sheet>

            <Sheet $current>
              <ReportColumn>
                <PageHeader>
                  <HeaderSide>
                    0531 Test BT
                    <br />
                    Druckliste: F60012 EFRG
                  </HeaderSide>
                  <HeaderTitle>
                    {'Ergebnisrechnung  Planvergleich  gemäß  §  50  SächsKomHVO-Doppik'}
                    <br />
                    Haushaltsjahr 2014
                  </HeaderTitle>
                  <HeaderSide $right>
                    31.07.2014 14:16:21
                    <br />
                    <WideText>Seite 2 von 3</WideText>
                  </HeaderSide>
                </PageHeader>
                <Table>
                  <Columns />
                  <tbody>
                    <tr>
                      <ColumnTitle colSpan={2} rowSpan={3}>
                        Ertrags- und Aufwandsarten
                      </ColumnTitle>
                      {headColumns.map((col) => (
                        <HeadCell key={col.text} $fs={col.fs} $track={col.track} $lh={col.lh} $pt={col.pt} $pr={col.pr}>
                          {col.text}
                        </HeadCell>
                      ))}
                      <HeadCell $fs={10.7} $track={0.3} $lh={13} $pt={3}>
                        {'Vergleich\nIst/Ansatz'}
                        <HeadNote>( Spalte 4 ./. Spalte 3)</HeadNote>
                      </HeadCell>
                    </tr>
                    <tr>
                      <UnitCell $h={15} $pt={0} colSpan={5}>
                        EUR
                      </UnitCell>
                    </tr>
                    <tr>
                      {['1', '2', '3', '4', '5'].map((n) => (
                        <UnitCell key={n} $h={16} $pt={1}>
                          {n}
                        </UnitCell>
                      ))}
                    </tr>
                    {pageTwoRows.map((row) => (
                      <ReportRow key={row.no} row={row} />
                    ))}
                  </tbody>
                </Table>
              </ReportColumn>
            </Sheet>
          </Scroller>
        </Content>
      </Body>
    </Window>
  )
}
